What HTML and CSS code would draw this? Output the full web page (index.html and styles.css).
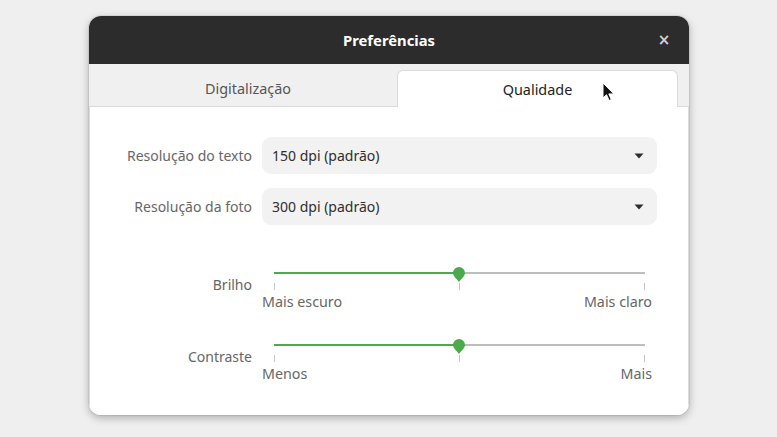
FILE: index.html
```html
<!DOCTYPE html>
<html lang="pt">
<head>
<meta charset="utf-8">
<title>Preferências</title>
<link rel="stylesheet" href="styles.css">
</head>
<body>
<div class="dialog">
  <header class="titlebar">
    <span class="title">Preferências</span>
    <button class="close" aria-label="Fechar">×</button>
  </header>
  <nav class="tabs">
    <div class="tab tab-scan">Digitalização</div>
    <div class="tab tab-quality active">Qualidade</div>
  </nav>
  <main class="content">
    <div class="form">
      <label class="label">Resolução do texto</label>
      <div class="combo"><span>150 dpi (padrão)</span><svg class="caret" width="10" height="6" viewBox="0 0 10 6"><path d="M0.5 0.5h9L5 5.5z" fill="#2e2e2e"/></svg></div>
      <label class="label">Resolução da foto</label>
      <div class="combo"><span>300 dpi (padrão)</span><svg class="caret" width="10" height="6" viewBox="0 0 10 6"><path d="M0.5 0.5h9L5 5.5z" fill="#2e2e2e"/></svg></div>

      <label class="label label-slider first">Brilho</label>
      <div class="slider first">
        <div class="track-area">
          <div class="track"><div class="fill" style="width:50%"></div></div>
          <svg class="knob" style="left:50%" width="14" height="18" viewBox="0 0 14 18"><path d="M7 1a6 6 0 0 1 6 6c0 3-3 5-6 9c-3-4-6-6-6-9a6 6 0 0 1 6-6z" fill="#4caa4d"/></svg>
        </div>
        <div class="ticks"><i></i><i></i><i></i></div>
        <div class="marks"><span>Mais escuro</span><span>Mais claro</span></div>
      </div>

      <label class="label label-slider second">Contraste</label>
      <div class="slider second">
        <div class="track-area">
          <div class="track"><div class="fill" style="width:50%"></div></div>
          <svg class="knob" style="left:50%" width="14" height="18" viewBox="0 0 14 18"><path d="M7 1a6 6 0 0 1 6 6c0 3-3 5-6 9c-3-4-6-6-6-9a6 6 0 0 1 6-6z" fill="#4caa4d"/></svg>
        </div>
        <div class="ticks"><i></i><i></i><i></i></div>
        <div class="marks"><span>Menos</span><span>Mais</span></div>
      </div>
    </div>
  </main>
  <svg class="cursor" width="14" height="22" viewBox="0 0 14 22"><path d="M1 1v15l3.5-3.3 2.6 5.8 2.2-1-2.5-5.6h5z" fill="#111" stroke="#fff" stroke-width="1"/></svg>
</div>
</body>
</html>
```

FILE: styles.css
```css
html, body {
  margin: 0;
  padding: 0;
}
body {
  background: #efefef;
  font-family: "Noto Sans", "DejaVu Sans", sans-serif;
  width: 777px;
  height: 437px;
  overflow: hidden;
  padding: 16px 0 0 89px;
  box-sizing: border-box;
}
.dialog {
  position: relative;
  width: 600px;
  height: 399px;
  border-radius: 12px;
  background: #fff;
  box-shadow: 0 3px 9px rgba(0,0,0,0.28), 0 0 0 1px rgba(0,0,0,0.06);
  display: flex;
  flex-direction: column;
  overflow: hidden;
}
.titlebar {
  position: relative;
  height: 48px;
  flex: none;
  background: #2c2c2c;
  display: flex;
  align-items: center;
  justify-content: center;
}
.title {
  color: #fff;
  font-weight: 700;
  font-size: 14.8px;
}
.close {
  position: absolute;
  right: 15px;
  top: 14px;
  width: 20px;
  height: 20px;
  padding: 0;
  border: 0;
  background: transparent;
  color: #cfcfcf;
  font-family: "DejaVu Sans", sans-serif;
  font-weight: 700;
  font-size: 15px;
  line-height: 20px;
}
.tabs {
  flex: none;
  height: 42px;
  background: #f0f0f0;
  border-bottom: 1px solid #dadada;
  display: flex;
  align-items: flex-end;
  padding: 0 10px 0 10px;
}
.tab {
  height: 36px;
  display: flex;
  align-items: center;
  justify-content: center;
  font-size: 14.4px;
  color: #555;
}
.tab-scan {
  width: 298px;
}
.tab-quality {
  width: 281px;
}
.tab.active {
  background: #fff;
  color: #222;
  border: 1px solid #dadada;
  border-bottom: 0;
  border-radius: 6px 6px 0 0;
  height: 37px;
  margin-bottom: -1px;
  box-sizing: border-box;
}
.content {
  flex: 1;
  background: #fff;
  border-left: 1px solid #dcdcdc;
  border-right: 1px solid #dcdcdc;
}
.form {
  display: grid;
  grid-template-columns: 152px 395px;
  column-gap: 10px;
  row-gap: 14px;
  padding: 30px 0 0 10px;
}
.label {
  justify-self: end;
  align-self: center;
  font-size: 14px;
  color: #666;
}
.combo {
  height: 37px;
  border-radius: 9px;
  background: #f2f2f2;
  display: flex;
  align-items: center;
  justify-content: space-between;
  padding: 0 13px 0 10px;
  font-size: 14px;
  color: #2e2e2e;
}
.caret {
  display: block;
}
.label-slider {
  align-self: start;
  line-height: 19px;
  padding-top: 12px;
}
.first {
  margin-top: 24px;
}
.second {
  margin-top: 10px;
}
.slider {
  display: flex;
  flex-direction: column;
}
.track-area {
  position: relative;
  height: 20px;
  margin: 0 12px;
}
.track {
  position: absolute;
  left: 0;
  right: 0;
  top: 9px;
  height: 2px;
  background: #bdbdbd;
}
.fill {
  height: 100%;
  background: #4caa4d;
}
.knob {
  position: absolute;
  top: 3px;
  margin-left: -7.5px;
}
.ticks {
  display: flex;
  justify-content: space-between;
  margin: 0 12px;
  height: 8px;
}
.ticks i {
  display: block;
  width: 1px;
  height: 7px;
  background: #c4c4c4;
}
.marks {
  display: flex;
  justify-content: space-between;
  font-size: 14.3px;
  color: #666;
  line-height: 19px;
  margin: 1px 5px 0 0;
}
.cursor {
  position: absolute;
  left: 513px;
  top: 66px;
}
```
